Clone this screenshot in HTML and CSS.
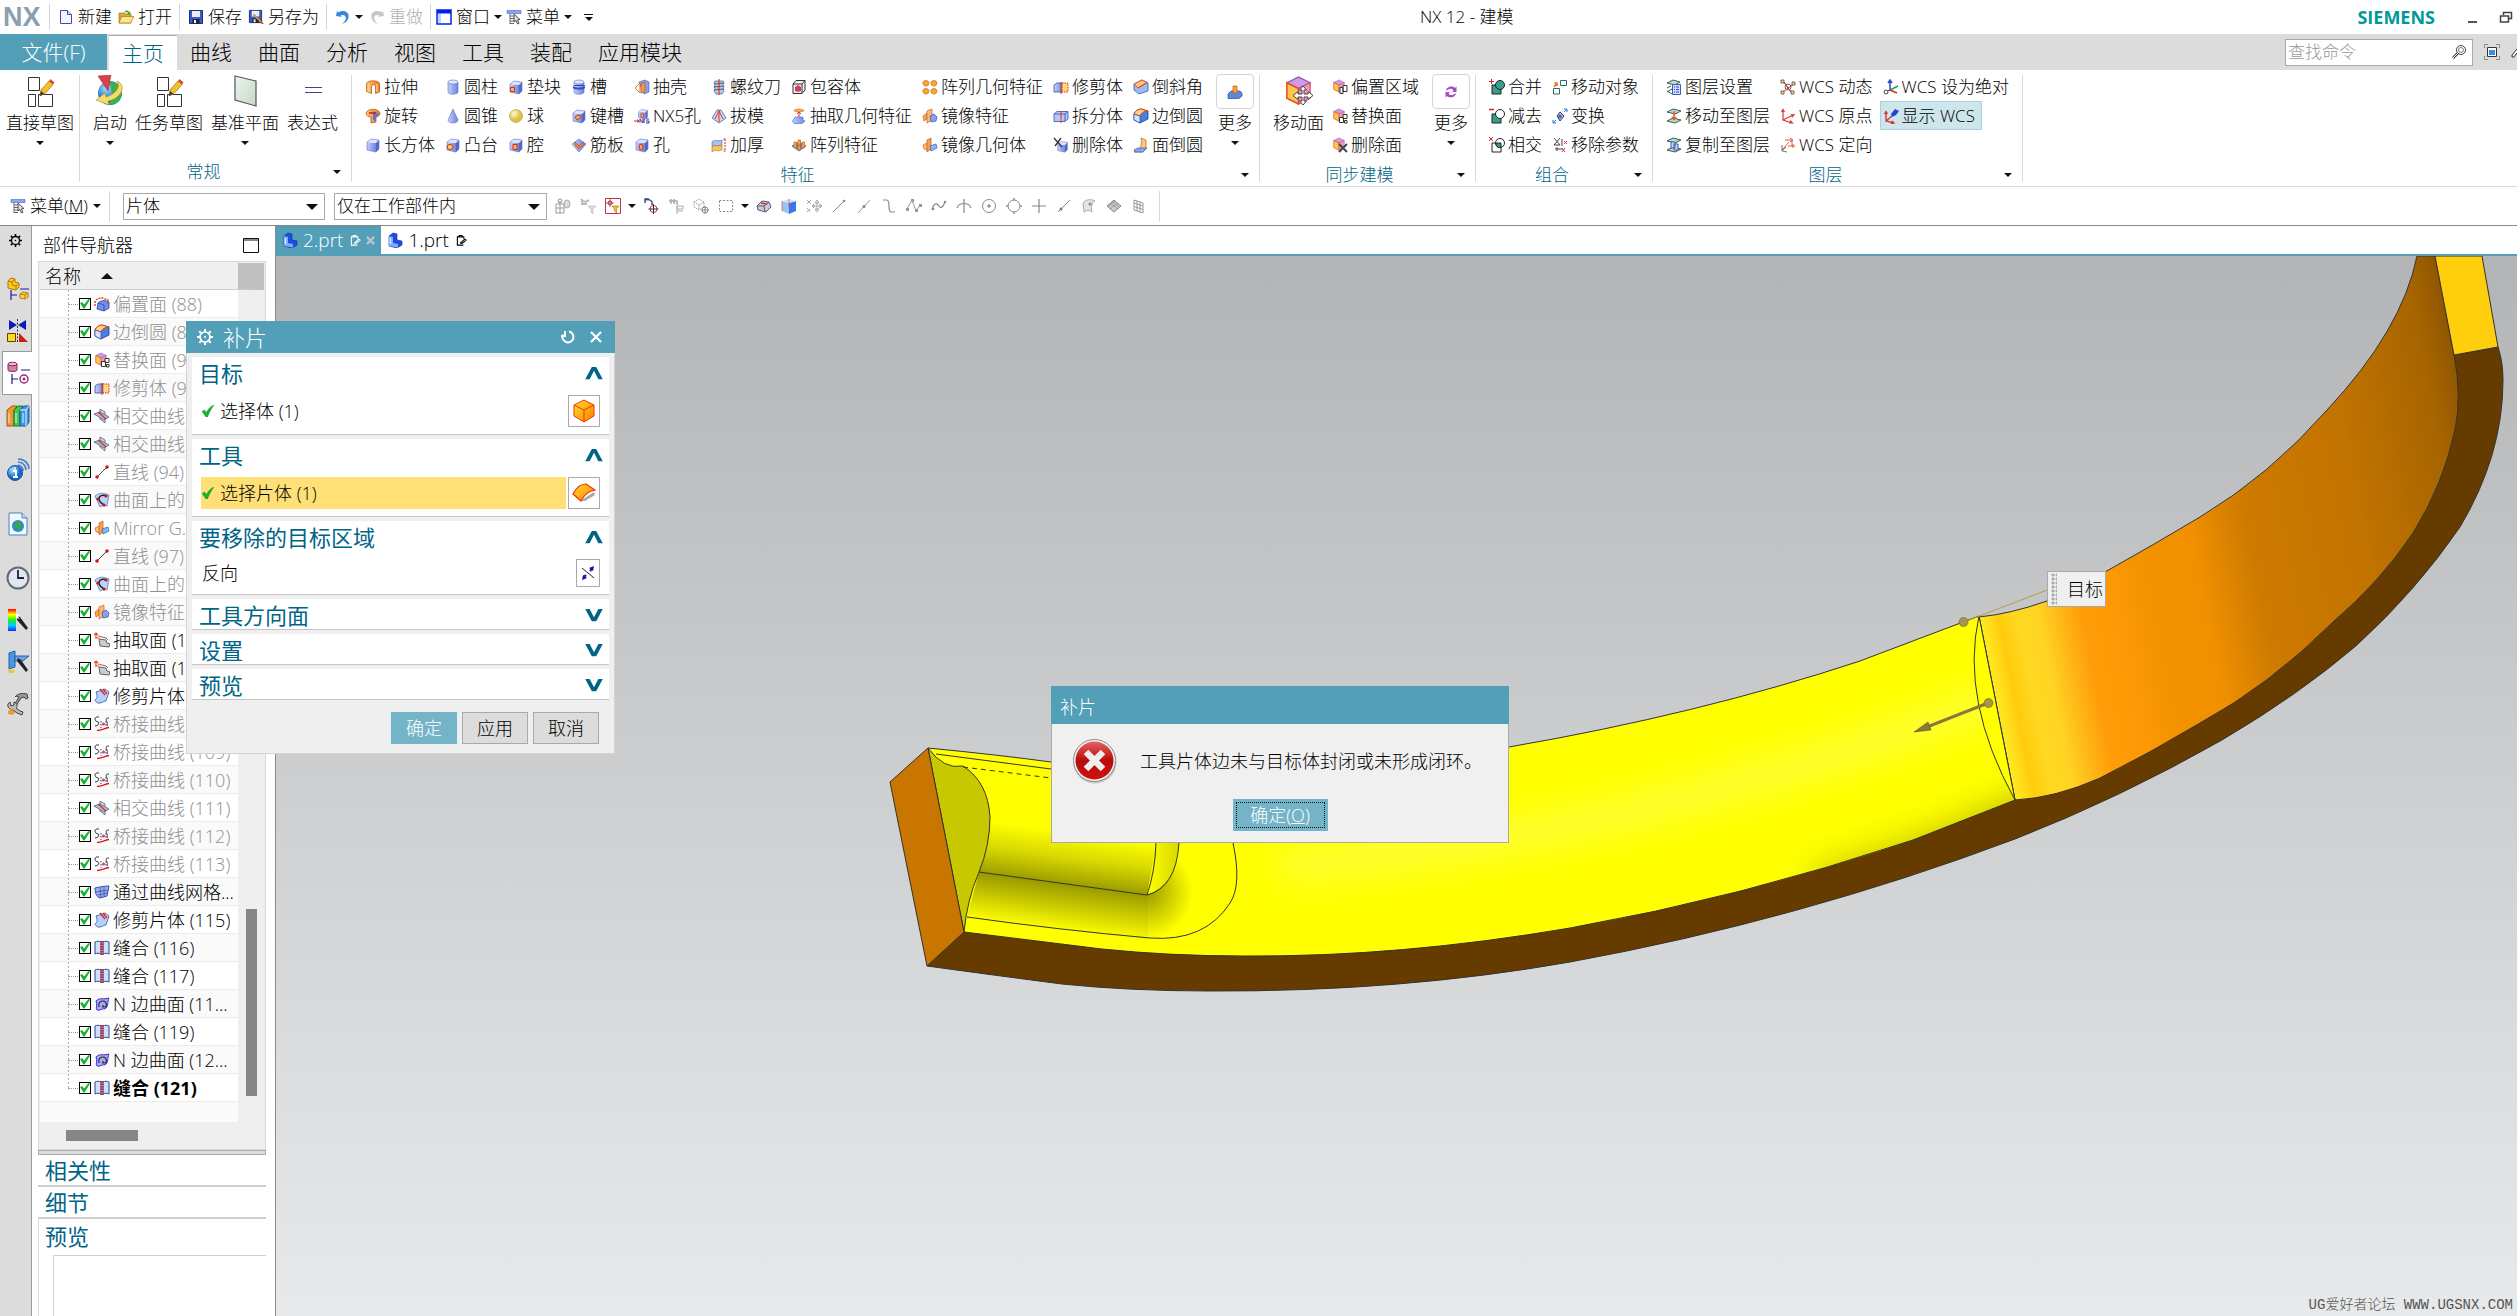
FILE: index.html
```html
<!DOCTYPE html>
<html lang="zh-CN">
<head>
  <meta charset="UTF-8">
  <meta name="viewport" content="width=device-width, initial-scale=1.0">
  <title>NX 12 - 建模</title>
  <link rel="stylesheet" href="styles.css">
</head>
<body>

<!-- icon sprite -->
<svg class="sprite" aria-hidden="true">
  <defs>
    <linearGradient id="gB"><stop offset="0" stop-color="#c3d0fb"/><stop offset="1" stop-color="#6c82e4"/></linearGradient>
    <linearGradient id="gO"><stop offset="0" stop-color="#ffc46a"/><stop offset="1" stop-color="#ee7a20"/></linearGradient>
    <linearGradient id="gRain" x2="0" y2="1"><stop offset="0" stop-color="#f00"/><stop offset=".25" stop-color="#ff0"/><stop offset=".5" stop-color="#2e2"/><stop offset=".75" stop-color="#0cf"/><stop offset="1" stop-color="#22f"/></linearGradient>
    <radialGradient id="gGlobe" cx=".35" cy=".3"><stop offset="0" stop-color="#a8e8ff"/><stop offset="1" stop-color="#1566c8"/></radialGradient>
    <radialGradient id="gBall" cx=".35" cy=".3"><stop offset="0" stop-color="#fffbd0"/><stop offset="1" stop-color="#d8c040"/></radialGradient>
    <linearGradient id="gPlane" x2="1" y2="1"><stop offset="0" stop-color="#eef4ee"/><stop offset="1" stop-color="#c4d8c6"/></linearGradient>
    <linearGradient id="gErr" x2="0" y2="1"><stop offset="0" stop-color="#e86060"/><stop offset=".5" stop-color="#b80c0c"/><stop offset="1" stop-color="#d01010"/></linearGradient>
    <linearGradient id="gHot" x2="1" y2="1"><stop offset="0" stop-color="#ffe030"/><stop offset="1" stop-color="#ff7a00"/></linearGradient>
  </defs>

  <symbol id="box" viewBox="0 0 16 16"><path d="M2 5l9 1v9l-9-2z" fill="url(#gB)"/><path d="M2 5l4-3 8 1-3 3z" fill="#dde5fd"/><path d="M11 6l3-3v9l-3 3z" fill="#5468c4"/><path d="M2 5l4-3 8 1v9l-3 3-9-2z" fill="none" stroke="#6070b8" stroke-width=".6"/></symbol>
  <symbol id="new" viewBox="0 0 16 16"><path d="M2.500 1.500h7l4 4v9h-11z" fill="#f4f6ff" stroke="#3c4ea0"/><path d="M9.500 1.500v4h4" fill="#ccd6f8" stroke="#3c4ea0"/></symbol>
  <symbol id="open" viewBox="0 0 16 16"><path d="M1 4h5l1 1h6v9H1z" fill="#dba93a" stroke="#a67a1a" stroke-width=".7"/><path d="M3.500 7.500H16L12.500 14H1z" fill="#ffe48a" stroke="#a67a1a" stroke-width=".7"/><path d="M6 4c1-3 4-3 5-1l1.500-.5L12 6 9 4.500 10 4C9 2.500 7.500 3 6 4z" fill="#44a83a"/></symbol>
  <symbol id="save" viewBox="0 0 16 16"><path d="M1.500 1.500h13v13h-13z" fill="#3a5cc8" stroke="#1a2f7c"/><path d="M4 2h8v6H4z" fill="#e8eeff"/><path d="M4.500 10h7v4.500h-7z" fill="#223"/><path d="M6 11h2v3H6z" fill="#fff"/></symbol>
  <symbol id="saveas" viewBox="0 0 16 16"><use href="#save" width="15" height="15"/><path d="M6 5l7 7 2.500 3-3-1.500-7-7z" fill="#ffb020" stroke="#a05000" stroke-width=".5"/><path d="M13 12.500l2.500 2.500-3-1z" fill="#d01010"/></symbol>
  <symbol id="undo" viewBox="0 0 16 16"><path d="M1 7l1-5 1.500 1.500C8 0 15 3 13.500 8.500 13 12 10 14 7 15c4-3 5-7 2.500-8.500C8 5.500 6.500 6 5.500 6.500L7 8z" fill="#3d86d8"/></symbol>
  <symbol id="redo" viewBox="0 0 16 16"><path d="M15 7l-1-5-1.500 1.500C8 0 1 3 2.500 8.500 3 12 6 14 9 15 5 12 4 8 6.500 6.500 8 5.500 9.500 6 10.500 6.500L9 8z" fill="#c6c6c6"/></symbol>
  <symbol id="win" viewBox="0 0 16 16"><path d="M1 1h14v14H1z" fill="#fff" stroke="#0020f0" stroke-width="1.500"/><path d="M1 1h14v3.500H1z" fill="#0020f0"/><path d="M2 5h3v9H2z" fill="#b8d8f8"/></symbol>
  <symbol id="menu" viewBox="0 0 16 16"><path d="M1 1.500h14v3H1z" fill="#8aa4ee" stroke="#4c64c0" stroke-width=".6"/><path d="M4 7h5M4 9.500h5M4 12h5M4 14.500h4M4 5v10" stroke="#666"/><path d="M8 5l6 5.500-2.500.3 1.500 3.500-1.500.7-1.500-3.500L8 13z" fill="#ddd" stroke="#333" stroke-width=".8"/></symbol>

  <symbol id="sketch" viewBox="0 0 30 32"><path d="M3.500 2.500h11v13h-11zM3.500 19.500h7v12h-7zM13.500 19.500h14v12h-14z" fill="#fff" stroke="#333"/><path d="M15 21l1-6 8-9 4 3.500-8 9z" fill="#f5c030" stroke="#9a6a10" stroke-width=".7"/><path d="M24 6l1.500-2 4 3.500L28 9.500z" fill="#d84a30"/><path d="M15 21l1-5 3 2.500z" fill="#333"/></symbol>
  <symbol id="launch" viewBox="0 0 32 32"><circle cx="16" cy="18" r="12" fill="url(#gGlobe)"/><path d="M13 7c6 2 2 8 6 11 3 2-2 8-5 11 7 2 14-4 14-11C28 10 20 5 13 7z" fill="#3db04c"/><path d="M23 6c10 4 5 17-9 20l1 4-13-5 9-7 1 4c10-3 15-10 11-16z" fill="#f6dc6c" stroke="#b08a20" stroke-width=".6"/><path d="M4 1l13-1-3 16z" fill="#d84050" stroke="#a02030" stroke-width=".5"/></symbol>
  <symbol id="plane" viewBox="0 0 32 32"><path d="M6 1l21 5v25L6 25z" fill="url(#gPlane)" stroke="#555" stroke-width="1.200"/></symbol>
  <symbol id="expr" viewBox="0 0 32 32"><path d="M8 12.500h17M8 17.500h17" stroke="#44408c" stroke-width="1.200"/></symbol>

  <symbol id="extrude" viewBox="0 0 16 16"><path d="M1.500 4c2-3 11-3 13 0v9l-4 1.500V7c-1-1.500-3-1.500-4 0v7.500l-5-2z" fill="url(#gO)" stroke="#b05a10" stroke-width=".7"/><path d="M4 5v8M12 5v8" stroke="#ffe8c0"/></symbol>
  <symbol id="revolve" viewBox="0 0 16 16"><path d="M1 5c2-5 12-5 14 0 0 3-3 4-4 4v5l-5 1V9C4 9 1 8 1 5z" fill="url(#gO)" stroke="#a05010" stroke-width=".7"/><path d="M8 3v9l3 1V9l3-3z" fill="#5878d8"/><path d="M4 5h7" stroke="#d01818" stroke-width="1.500"/></symbol>
  <symbol id="cyl" viewBox="0 0 16 16"><path d="M3 3v10c0 3 10 3 10 0V3z" fill="url(#gB)" stroke="#6070b8" stroke-width=".6"/><ellipse cx="8" cy="3" rx="5" ry="2" fill="#e2e9fe" stroke="#6070b8" stroke-width=".6"/></symbol>
  <symbol id="cone" viewBox="0 0 16 16"><path d="M8 1l5 11c0 4-10 4-10 0z" fill="url(#gB)" stroke="#6070b8" stroke-width=".6"/></symbol>
  <symbol id="ball" viewBox="0 0 16 16"><circle cx="8" cy="8" r="6.500" fill="url(#gBall)" stroke="#b09c30" stroke-width=".6"/></symbol>
  <symbol id="boss" viewBox="0 0 16 16"><use href="#box"/><ellipse cx="5" cy="10" rx="3" ry="2.500" fill="#ffd060" stroke="#d03010"/></symbol>
  <symbol id="pad" viewBox="0 0 16 16"><use href="#box"/><path d="M2.500 8.500h4v4h-4z" fill="#ffb060" stroke="#d03010"/></symbol>
  <symbol id="pocket" viewBox="0 0 16 16"><use href="#box"/><path d="M5 7.500h4v5H5z" fill="#f6b080" stroke="#d03010"/></symbol>
  <symbol id="hole" viewBox="0 0 16 16"><use href="#box"/><ellipse cx="7" cy="10" rx="2" ry="3" fill="#f6a070" stroke="#d03010"/></symbol>
  <symbol id="slot" viewBox="0 0 16 16"><use href="#cyl"/><path d="M3 6h10l1.500 1H3zM2 7c2 2 10 2 12 0v2c-2 2-10 2-12 0z" fill="#3450b8"/></symbol>
  <symbol id="keyslot" viewBox="0 0 16 16"><use href="#box"/><path d="M4 9l4-2 2 2-4 3z" fill="#ffb060" stroke="#d03010"/></symbol>
  <symbol id="rib" viewBox="0 0 16 16"><path d="M1 7l7-5 7 5-7 8z" fill="url(#gB)" stroke="#4868b8" stroke-width=".6"/><path d="M4 5l4 4 4-4v3l-4 4-4-4z" fill="#f48040" stroke="#c03810" stroke-width=".6"/></symbol>
  <symbol id="shell" viewBox="0 0 16 16"><path d="M5 3l6-2 4 2v10l-5 2z" fill="#8aa0e8" stroke="#4458a8" stroke-width=".6"/><path d="M1 9l5-5v10z" fill="#fff0d0" stroke="#a05010" stroke-width=".6"/><path d="M7 5l4-2v10l-4 1z" fill="#f49a48" stroke="#a05010" stroke-width=".6"/></symbol>
  <symbol id="nx5" viewBox="0 0 16 16"><use href="#hole" x="3" width="12" height="12"/><path d="M0 13h5M3 11.500L5 13l-2 1.500" stroke="#e02020" fill="none"/><path d="M6 15v-4l3 4v-4M10 11v4M12 11h3M12 13h3v2h-3" stroke="#44308c" fill="none"/></symbol>
  <symbol id="thread" viewBox="0 0 16 16"><path d="M4 2h8l1 2-1 1.500L13 8l-1 1.500 1 2.500-2 3H5l-2-3 1-2.500L3 8l1-2.500L3 4z" fill="#b9cbe0" stroke="#4a6080" stroke-width=".7"/><path d="M3 5l10-1M3 8l10-1M3 11l10-1" stroke="#4a6080"/><path d="M8 0v16" stroke="#e02020"/></symbol>
  <symbol id="draft" viewBox="0 0 16 16"><path d="M1 10l5-8h4l5 8-7 5z" fill="#c8d6f4" stroke="#4868a8" stroke-width=".8"/><path d="M8 2v12M8 3L4 11M8 3l4 8" stroke="#e03020" fill="none"/></symbol>
  <symbol id="thick" viewBox="0 0 16 16"><path d="M1 5c3-3 6 0 10-2v5c-4 2-7-1-10 2z" fill="#a8c0f0" stroke="#4868b8" stroke-width=".6"/><path d="M1 10c3-3 6 0 10-2v5c-4 2-7-1-10 2z" fill="#f8c460" stroke="#a87018" stroke-width=".6"/><path d="M14 2v12M12.500 2h3M12.500 14h3" stroke="#d02020" stroke-dasharray="2 1"/></symbol>
  <symbol id="bound" viewBox="0 0 16 16"><path d="M2 5l3-3.500h9V11l-3 3.500H2z" fill="#f0f0f0" stroke="#333"/><path d="M11 14.500V5H2M11 5l3-3.500" fill="none" stroke="#333"/><path d="M4 8l3-2 3 2v4l-3 1-3-1z" fill="#d04060"/></symbol>
  <symbol id="extract" viewBox="0 0 16 16"><path d="M3 2.500c3-2 7-2 10 0-2 2-8 2-10 0z" fill="#ffb050" stroke="#c06010" stroke-width=".6"/><path d="M8 9V4M6 6l2-2 2 2" stroke="#e03020" fill="none"/><path d="M4 9h8v3l2 1-3 2.500H3L1.500 13z" fill="url(#gB)" stroke="#4868b8" stroke-width=".6"/></symbol>
  <symbol id="pattern" viewBox="0 0 16 16"><path d="M1 9l7-4 7 4-7 5z" fill="#7088d8" stroke="#3a50a0" stroke-width=".6"/><path d="M3 5h2.500v6H3zM7 3h2.500v6H7zM7 8h2.500v5H7zM11 5h2.500v6H11z" fill="#f8a848" stroke="#b05a10" stroke-width=".6"/></symbol>
  <symbol id="patgeo" viewBox="0 0 16 16"><g fill="#f8a830" stroke="#c86c10" stroke-width=".7"><path id="pg" d="M1 3l2-1.500 3 .5 1 2-1 2.500L3 7 1 5.500z"/><use href="#pg" x="8"/><use href="#pg" y="8"/><use href="#pg" x="8" y="8"/></g></symbol>
  <symbol id="mirfeat" viewBox="0 0 16 16"><path d="M1 8l4-3v6l-3 2z" fill="#f8a848" stroke="#b05a10" stroke-width=".6"/><path d="M5 3l5-2v11l-5 3z" fill="#ffb878" stroke="#d06020" stroke-width=".7"/><path d="M8 8l4-2 3 3-1 4-5 1z" fill="#8aa0f0" stroke="#3a50a0" stroke-width=".7"/></symbol>
  <symbol id="mirbody" viewBox="0 0 16 16"><path d="M1 8l4-2 2 2v5l-5-1z" fill="#ffc070" stroke="#b05a10" stroke-width=".6"/><path d="M5 3l4-2v11l-4 3z" fill="#f8a050" stroke="#c05a18" stroke-width=".7"/><path d="M8 9l6-2 1 4-6 3z" fill="#8cb4f0" stroke="#3060a8" stroke-width=".7"/></symbol>
  <symbol id="trim" viewBox="0 0 16 16"><path d="M1 6l3-2h6v9H1z" fill="url(#gB)" stroke="#3a50a8" stroke-width=".8"/><path d="M9 4h6v9H9z" fill="#ffd880" stroke="#d03010" stroke-dasharray="1.500 1"/><path d="M8 3v12" stroke="#c03020"/></symbol>
  <symbol id="split" viewBox="0 0 16 16"><path d="M1 6l3-2.500h11V11l-3 2.500H1z" fill="#b8c6f6" stroke="#3a50a8" stroke-width=".8"/><path d="M1 6h11v7M12 6l3-2.500" stroke="#3a50a8" fill="none" stroke-width=".8"/><path d="M8 3v12" stroke="#e03020"/></symbol>
  <symbol id="delbody" viewBox="0 0 16 16"><use href="#box" x="3" y="3" width="13" height="13"/><path d="M1 1l8 9M8 1L2 9" stroke="#333" stroke-width="1.300"/></symbol>
  <symbol id="chamfer" viewBox="0 0 16 16"><path d="M1 5l8-4 6 3v8l-9 3-5-4z" fill="#9cbcf0" stroke="#2c5ca8" stroke-width=".8"/><path d="M1 5l8-4 5 2.500L5 9z" fill="#ffc878" stroke="#e04010" stroke-width=".8"/><path d="M5 9l9-5.500" stroke="#e04010"/></symbol>
  <symbol id="eblend" viewBox="0 0 16 16"><path d="M1 6c1-3 4-5 7-5l7 2v8l-8 4-6-3z" fill="#4a80dc" stroke="#1c3c90" stroke-width=".8"/><path d="M1 6c1-3 4-5 7-5l7 2c-4 0-7 2-8 5z" fill="#ffd080" stroke="#d84010" stroke-width=".9"/><path d="M1 6l6 2v7l-6-3z" fill="#d4e2fb" stroke="#1c3c90" stroke-width=".6"/></symbol>
  <symbol id="fblend" viewBox="0 0 16 16"><path d="M8 1l5 2v9L9 15H1l3-3c4 0 5-4 4-11z" fill="#ffc880" stroke="#b06818" stroke-width=".7"/><path d="M1 13l4-2h9l-4 4H2z" fill="#88a8ee" stroke="#3a58a8" stroke-width=".7"/></symbol>
  <symbol id="more" viewBox="0 0 16 16"><path d="M1 10l3-3h9l2 2v3l-3 2.500H1z" fill="#5c88d8" stroke="#2c4c98" stroke-width=".7"/><path d="M6 2h4v7H6z" fill="#f8a040" stroke="#c05a10" stroke-width=".7"/></symbol>

  <symbol id="pcube" viewBox="0 0 16 16"><path d="M2 4l6-3 6 3-6 3z" fill="#cf9ae8" stroke="#9050b0" stroke-width=".6"/><path d="M2 4l6 3v8l-6-3z" fill="#ffc848" stroke="#e05020" stroke-width=".8"/><path d="M14 4L8 7v8l6-3z" fill="#f49ab0" stroke="#c05070" stroke-width=".6"/></symbol>
  <symbol id="moveface" viewBox="0 0 32 32"><use href="#pcube" width="31" height="31"/><path d="M20 11l3.500 4H21v4h4v-2.500l5 4-5 4V22h-4v4h2.500L20 30l-3.500-4H19v-4h-4v2.500l-5-4 5-4V19h4v-4h-2.500z" fill="#fff" stroke="#444"/></symbol>
  <symbol id="offreg" viewBox="0 0 16 16"><use href="#pcube" width="14" height="14"/><path d="M8 8.500h3v6H8zM11 6.500h4v6h-4z" fill="#fff" stroke="#333"/></symbol>
  <symbol id="replface" viewBox="0 0 16 16"><use href="#pcube" width="14" height="14"/><path d="M7.500 9.500h4v5h-4zM11 6.500h4v4h-4zM12.500 12.500h2.500v2.500h-2.500z" fill="#fff" stroke="#333"/></symbol>
  <symbol id="delface" viewBox="0 0 16 16"><use href="#pcube" width="14" height="14"/><path d="M7 7l8 8M15 7l-8 8" stroke="#444" stroke-width="2"/></symbol>
  <symbol id="recycle" viewBox="0 0 16 16"><path d="M3 7c0-4 6-6 9-3l1.500-1.500V8H9l1.500-1.500C9 4 6 4.500 3 7zM13 9c0 4-6 6-9 3l-1.500 1.500V8H7L5.500 9.500C7 12 10 11.500 13 9z" fill="#a64cc4"/></symbol>

  <symbol id="unite" viewBox="0 0 16 16"><path d="M3 6h9v9H3z" fill="#34a08c" stroke="#222"/><circle cx="11" cy="6" r="4.500" fill="#34a08c" stroke="#222"/><path d="M0 2.500h5M2.500 0v5" stroke="#e02020"/></symbol>
  <symbol id="subtract" viewBox="0 0 16 16"><path d="M3 6h9v9H3z" fill="#34a08c" stroke="#222"/><circle cx="11" cy="6" r="4.500" fill="#fff" stroke="#222"/><path d="M0 1.500h5" stroke="#e02020" stroke-width="1.500"/></symbol>
  <symbol id="intersect" viewBox="0 0 16 16"><path d="M3 6h9v9H3z" fill="#fff" stroke="#222"/><circle cx="11" cy="6" r="4.500" fill="#fff" stroke="#222"/><path d="M7 6h5v4.500C8 11 7 9 7 6z" fill="#34a08c" stroke="#222"/><path d="M0 0l4 4M4 0L0 4" stroke="#e02020"/></symbol>
  <symbol id="moveobj" viewBox="0 0 16 16"><path d="M8.500 1.500h6v5h-6zM1.500 9.500h6v5.500h-6z" fill="#fff" stroke="#2c6c64"/><path d="M2 8l3-4M2.500 4H5v3" stroke="#f07020" fill="none" stroke-width="1.500"/></symbol>
  <symbol id="transform" viewBox="0 0 16 16"><path d="M8 4l4 4-4 5-3-5z" fill="#b8c4ec" stroke="#34407c"/><circle cx="8" cy="8.500" r="2" fill="#5868b0"/><path d="M1 15l3-3M1 12v3h3M15 1l-3 3M12 1h3v3" stroke="#3070e0" fill="none"/></symbol>
  <symbol id="rmparm" viewBox="0 0 16 16"><path d="M2 1l6 7M8 1L2 8M2 8h6M10 2v7M3 12h8M5 10v4" stroke="#444" fill="none"/><path d="M12 4l3 3M15 4l-3 3M10 11l3 4M13 11l-3 4" stroke="#d84040"/></symbol>
  <symbol id="layset" viewBox="0 0 16 16"><path d="M1 4l6-3 7 2-5 3zM1 9l4-2M1 13l5-3M1 12l5 3" fill="#c0dccc" stroke="#3c5c54"/><path d="M6.500 5.500h8v10h-8z" fill="#d4dcff" stroke="#4458b8"/><path d="M8 8h1M10 8h3M8 10.500h1M10 10.500h3M8 13h1M10 13h3" stroke="#3048d0"/></symbol>
  <symbol id="movelay" viewBox="0 0 16 16"><path d="M1 4l6-3 8 2-6 3zM1 13l6-3 8 2-6 3z" fill="#bcd8c8" stroke="#3c5c54"/><path d="M8 3v8M6 9l2 2.500L10 9" stroke="#e85818" fill="none" stroke-width="1.500"/></symbol>
  <symbol id="copylay" viewBox="0 0 16 16"><path d="M1 4l6-3 8 2-6 3zM1 13l6-3 8 2-6 3z" fill="#bcd8c8" stroke="#3c5c54"/><path d="M5 5h4v6H5zM8 7h4v6H8z" fill="#c8d4ff" stroke="#4458a8"/></symbol>
  <symbol id="wcsdyn" viewBox="0 0 16 16"><path d="M3 2l5 7 6-4M8 9l4 5M3 2l9 12M3 13l5-4" stroke="#c83030" fill="none"/><path d="M1 1h3v3H1zM12 3h3v3h-3zM1 12h3v3H1zM11 12h3v3h-3z" fill="#ffe070" stroke="#333" stroke-width=".7"/><circle cx="8" cy="8" r="3" fill="none" stroke="#806060"/></symbol>
  <symbol id="wcsorg" viewBox="0 0 16 16"><path d="M3 3v9l9 3M3 12l10-5M1.500 4L3 1.500 4.500 4M11 6.500l3 .2-2 2.300M10 12.500l2.500 2.500H9" stroke="#d83838" fill="none" stroke-width="1.200"/></symbol>
  <symbol id="wcsori" viewBox="0 0 16 16"><path d="M5 3h7M10 1l3 2-3 2M12 3v6M8 9h7M13 7v4M2 13l7-8" stroke="#e05838" fill="none"/><path d="M2 8v6l5 1M2 14l4-4" stroke="#777" fill="none"/></symbol>
  <symbol id="wcsabs" viewBox="0 0 16 16"><path d="M7 2v9M5 4l2-3 2 3" stroke="#2848d0" fill="none" stroke-width="1.500"/><path d="M7 11l8-4" stroke="#28a040" stroke-width="1.500"/><path d="M7 11l7 3" stroke="#d03030" stroke-width="1.500"/><circle cx="3" cy="13" r="2" fill="none" stroke="#444"/><path d="M4.500 12L7 11" stroke="#444"/></symbol>
  <symbol id="wcsshow" viewBox="0 0 16 16"><path d="M3 4v9l8 2M3 13l6-5M1.500 6L3 3.500 4.500 6M9 13l2 2-3 .5" stroke="#d83030" fill="none" stroke-width="1.300"/><path d="M8 6l4-5 4 2-3 4-4 2z" fill="#2444d0"/></symbol>

  <!-- selection bar -->
  <symbol id="s1" viewBox="0 0 16 16"><path d="M1 6h8v9H1zM1 10h8M5 3v12" fill="none" stroke="#999"/><circle cx="5" cy="3" r="2" fill="none" stroke="#999"/><ellipse cx="12" cy="6" rx="3" ry="4" fill="#ddd" stroke="#aaa"/></symbol>
  <symbol id="s2" viewBox="0 0 16 16"><path d="M1 1c3 4 6 3 8 1M2 2v4h5" fill="none" stroke="#bbb" stroke-width="2"/><path d="M8 8h8l-3 3v5l-2-2v-3z" fill="#ddd" stroke="#bbb" stroke-width=".7"/></symbol>
  <symbol id="s3" viewBox="0 0 16 16"><path d="M.5.500h15v15H.5z" fill="#fff" stroke="#c83040"/><circle cx="5" cy="5" r="2" fill="none" stroke="#a02838"/><path d="M5 1v8M1 5h8" stroke="#a02838" stroke-width=".7"/><path d="M7 8h7l-2.500 3v4l-2-2v-2z" fill="#f4b430" stroke="#b87a10" stroke-width=".6"/></symbol>
  <symbol id="s4" viewBox="0 0 16 16"><path d="M2 5V1h4M2 2c4-1 8 0 7 5" fill="none" stroke="#3a4484" stroke-width="1.400"/><circle cx="10.500" cy="11" r="3.500" fill="none" stroke="#d83040"/><path d="M10.500 6v10M5.500 11h10" stroke="#333"/></symbol>
  <symbol id="s5" viewBox="0 0 16 16"><path d="M1 3h8v4M3 1v5M6 1v5" fill="none" stroke="#aaa" stroke-width="1.500"/><path d="M9 8h6v3H9zM9 13h6M9 8v8" fill="none" stroke="#aaa"/></symbol>
  <symbol id="s6" viewBox="0 0 16 16"><path d="M1 4l5-3 5 3v5l-5 3-5-3zM1 4l5 3 5-3M6 7v5" fill="none" stroke="#999" stroke-dasharray="1.500 1"/><circle cx="12" cy="12" r="3" fill="none" stroke="#888"/><path d="M12 8v8M8 12h8" stroke="#888"/></symbol>
  <symbol id="s7" viewBox="0 0 16 16"><path d="M1.500 2.500h13v11h-13z" fill="none" stroke="#888" stroke-dasharray="2 1.500"/></symbol>
  <symbol id="s8" viewBox="0 0 16 16"><path d="M1 8l5-5 7 1 2 5-5 5-8-2z" fill="#c8ccd8" stroke="#555b70"/><path d="M9 14l-1-6 5-4M8 8L1 8" stroke="#555b70" fill="none"/><path d="M5 5l6 1" stroke="#e03030" stroke-width="1.500"/></symbol>
  <symbol id="s9" viewBox="0 0 16 16"><path d="M1 3l7 2v11l-7-3z" fill="#9cc4f4"/><path d="M8 5l7-2v10l-7 3z" fill="#3c78e4"/><path d="M1 3l7-2 7 2-7 2z" fill="#d0e4fc"/><path d="M8 1v9M1 3v10" stroke="#e04060" stroke-width=".7"/></symbol>
  <symbol id="s10" viewBox="0 0 16 16"><path d="M1 2l4 4M1 6l4-4M1 10l3 4M1 14l3-3M7 8h8M11 4v8" fill="none" stroke="#aaa"/><path d="M11 2l2 3h-4zM11 14l2-3H9zM6 8l2-2v4zM16 8l-2-2v4z" fill="none" stroke="#999" stroke-width=".8"/></symbol>
  <symbol id="s11" viewBox="0 0 16 16"><path d="M2 14L13 3" stroke="#888" fill="none"/><circle cx="13" cy="3" r="1.300" fill="#888"/></symbol>
  <symbol id="s12" viewBox="0 0 16 16"><path d="M2 15L14 2" stroke="#999" fill="none"/><circle cx="8" cy="8.500" r="1.500" fill="#888"/></symbol>
  <symbol id="s13" viewBox="0 0 16 16"><path d="M2 2h4c4 1 0 11 4 12h4" stroke="#888" fill="none" stroke-width="1.200"/></symbol>
  <symbol id="s14" viewBox="0 0 16 16"><path d="M1 11l5-9 4 11 4-6" stroke="#999" fill="none"/><path d="M0 10h3v3H0zM5 1h3v3H5zM9 11h3v3H9zM13 6h3v3h-3z" fill="#999"/></symbol>
  <symbol id="s15" viewBox="0 0 16 16"><path d="M1 12c2-8 5-7 7-4s4 1 6-4" stroke="#888" fill="none" stroke-width="1.200"/><circle cx="2" cy="11" r="1.300" fill="#888"/><circle cx="14" cy="4" r="1.300" fill="#888"/></symbol>
  <symbol id="s16" viewBox="0 0 16 16"><path d="M8 1v14M1 10c2-6 12-6 14 0" stroke="#888" fill="none" stroke-width="1.200"/></symbol>
  <symbol id="s17" viewBox="0 0 16 16"><circle cx="8" cy="8" r="6.500" fill="none" stroke="#888"/><path d="M8 6v4M6 8h4" stroke="#777"/></symbol>
  <symbol id="s18" viewBox="0 0 16 16"><circle cx="8" cy="8" r="6" fill="none" stroke="#888"/><path d="M7 0h2v3H7zM7 13h2v3H7zM0 7h3v2H0zM13 7h3v2h-3z" fill="#aaa"/></symbol>
  <symbol id="s19" viewBox="0 0 16 16"><path d="M8 1v14M1 8h14" stroke="#888" stroke-width="1.200"/></symbol>
  <symbol id="s20" viewBox="0 0 16 16"><path d="M2 14L14 2" stroke="#888"/><circle cx="5" cy="11" r="1.500" fill="#777"/></symbol>
  <symbol id="s21" viewBox="0 0 16 16"><path d="M2 5c3-4 8-4 12-2-4 2-4 7-3 11-4-3-6-1-8 0z" fill="#e4e4e4" stroke="#aaa"/><circle cx="9" cy="6" r="1.500" fill="#888"/></symbol>
  <symbol id="s22" viewBox="0 0 16 16"><path d="M1 8l7-6 7 6-7 6z" fill="#ccc" stroke="#888"/><path d="M4 5l8 6M6 3l7 6M4 11l8-6M2 9l7-6" stroke="#888" stroke-width=".7"/></symbol>
  <symbol id="s23" viewBox="0 0 16 16"><path d="M3 2l9 3v10l-9-3zM6 3v10M9 4v10M3 5l9 3M3 8.500l9 3" fill="none" stroke="#999"/></symbol>

  <!-- navigator tree -->
  <symbol id="offface" viewBox="0 0 16 16"><path d="M4 7c2-2 5-3 8-2l3 1v6l-5 3-7-2z" fill="#6f90ec" stroke="#2840a0" stroke-width=".8"/><path d="M4 7l6 2v6" fill="none" stroke="#2840a0" stroke-width=".7"/><path d="M1 10V6c1-3 4-4 7-4l6 2v4" fill="none" stroke="#e02828" stroke-dasharray="2 1" stroke-width="1.300"/></symbol>
  <symbol id="intc" viewBox="0 0 16 16"><path d="M6 1l5 3v11l-5-4z" fill="#d0dcec" stroke="#4a6080" stroke-width=".8"/><path d="M0 6l6-2 9 5-5 3z" fill="#aebed4" stroke="#4a6080" stroke-width=".8"/><path d="M4 4l8 7" stroke="#e83020" stroke-width="1.600"/></symbol>
  <symbol id="line" viewBox="0 0 16 16"><path d="M3 13L13 3" stroke="#444"/><circle cx="3" cy="13" r="1.800" fill="#e01010"/><circle cx="13" cy="3" r="1.800" fill="#e01010"/></symbol>
  <symbol id="curveon" viewBox="0 0 16 16"><path d="M1 4c5-4 9-3 14-1l-2 11c-3-1-6 0-7 1z" fill="#b8d4f8" stroke="#5070a8" stroke-width=".7"/><path d="M13 4c-5-2-8 0-8 3s2 4 5 6" fill="none" stroke="#222" stroke-width="1.500"/><circle cx="12" cy="4" r="1.600" fill="#d01010"/><circle cx="4" cy="7" r="1.600" fill="#d01010"/><circle cx="10" cy="13" r="1.600" fill="#d01010"/></symbol>
  <symbol id="extface" viewBox="0 0 16 16"><path d="M5 7l7 1 1 3 3 1-1 3-9-1z" fill="#ccc" stroke="#555" stroke-width=".9"/><path d="M4 4l8 2 2 2" fill="none" stroke="#a86040"/><path d="M2 6V1M0 3l2-2 2 2M1 6h4" stroke="#e84810" fill="none" stroke-width="1.200"/></symbol>
  <symbol id="trimsh" viewBox="0 0 16 16"><path d="M2 4l9-3 4 3-3 9c-3 0-5 3-8 2-2-1-3-2-3-3 3-2 2-5 1-8z" fill="#b4d0fa" stroke="#3a58a8" stroke-width=".8"/><path d="M6 1l5 6M9 1l4 5" stroke="#e02020" stroke-width="1.300"/></symbol>
  <symbol id="bridge" viewBox="0 0 16 16"><path d="M5 1C0 0 0 5 3 5.500S5 10 1 10M15 2c-4 0-3 2-2 4s-1 3 1 4" fill="none" stroke="#333"/><path d="M7 5v7M12 5v6" stroke="#2030d0" stroke-dasharray="1.500 1.500"/><path d="M3 14.500c4 0 7-2 12-3" fill="none" stroke="#e01818" stroke-width="1.400"/><circle cx="9.500" cy="8" r="1.500" fill="#e84010"/></symbol>
  <symbol id="mesh" viewBox="0 0 16 16"><path d="M1 4c5-1 9-2 14-2l-2 10-7 2c-3-1-5-4-5-10z" fill="#9aaef2" stroke="#3c50a8"/><path d="M2 8l12-2M4 11l9-2M6 3l1 11M10 2.500v10" stroke="#3c50a8" stroke-width=".8"/></symbol>
  <symbol id="sew" viewBox="0 0 16 16"><path d="M1 2c2-1 4-1 6 0v12c-2-1-4-1-6 0zM15 2c-2-1-4-1-6 0v12c2-1 4-1 6 0z" fill="#cfe0fb" stroke="#24489c"/><path d="M8 1v14" stroke="#d01818" stroke-width="3" stroke-dasharray="1.500 1"/></symbol>
  <symbol id="nside" viewBox="0 0 16 16"><path d="M2 5c4-4 7-1 13-3-2 4 0 8-4 11-3-1-5 2-8 1-2-2 1-5-1-9z" fill="#a8a8fa" stroke="#4030c8"/><path d="M5 11c-1-4 1-6 4-6s4 3 3 6H9V9" fill="none" stroke="#222" stroke-width="1.200"/></symbol>

  <!-- resource bar -->
  <symbol id="gear" viewBox="0 0 16 16"><circle cx="8" cy="8" r="5" fill="none" stroke="currentColor" stroke-width="1.700"/><path d="M8 0v3M8 13v3M0 8h3M13 8h3M2.300 2.300l2 2M11.700 11.700l2 2M2.300 13.700l2-2M11.700 4.300l2-2" stroke="currentColor" stroke-width="2"/><circle cx="8" cy="8" r="1" fill="currentColor"/></symbol>
  <symbol id="rAsm" viewBox="0 0 24 24"><path d="M2 4l3-3 4 1v3l4 1v4l-3 3-8-2z" fill="#ffc820" stroke="#b07808"/><path d="M2 4l4 1v3l4 1v4M6 5l3-3M10 9l3-3" fill="none" stroke="#b07808"/><path d="M14 17l3-2 5 1v4l-3 2-5-1zM14 17l5 1v4M19 18l3-2" fill="#ffd850" stroke="#b07808"/><path d="M5 13v10M5 18h6M14 12h9" stroke="#1a1a90" stroke-width="1.200" fill="none"/></symbol>
  <symbol id="rCon" viewBox="0 0 24 24"><path d="M3 1l8 5-8 5zM20 1l-8 5 8 5z" fill="#1018b8"/><path d="M1.500 14.500h8v8h-8z" fill="#ffd820" stroke="#604000"/><path d="M13 14l9 9h-9z" fill="#d02010"/><path d="M11.500 0v24" stroke="#333" stroke-dasharray="2 1.500"/></symbol>
  <symbol id="rNav" viewBox="0 0 24 24"><path d="M1 3v6c0 2 9 2 9 0V3z" fill="#d080a8" stroke="#802858"/><ellipse cx="5.500" cy="3" rx="4.500" ry="1.800" fill="#f0b8d0" stroke="#802858"/><path d="M5 13v10M5 18h6M14 9h9" stroke="#1a1a90" stroke-width="1.200" fill="none"/><circle cx="17" cy="18" r="4" fill="#fff" stroke="#903070" stroke-width="1.500"/><circle cx="17" cy="18" r="1.500" fill="#903070"/></symbol>
  <symbol id="rLib" viewBox="0 0 24 24"><path d="M1 6l5-4h5L8 6v16H1z" fill="#f09830" stroke="#a05808"/><path d="M8 6l4-4h5l-3 4v16H8z" fill="#40c850" stroke="#108028"/><path d="M14 6l4-4h5v16l-3 4h-6z" fill="#3c98e0" stroke="#1058a0"/><path d="M14 6h6v16M20 6l3-4M3 9v10M10 9v10M17 9v10" fill="none" stroke="#e8f4ff"/></symbol>
  <symbol id="rInfo" viewBox="0 0 24 24"><circle cx="9" cy="15" r="7.500" fill="url(#gGlobe)" stroke="#1c50a8"/><path d="M7 13h3v6M7 19h5M9 9.500v2" stroke="#fff" stroke-width="2" fill="none"/><path d="M12 7c4 1 5 4 5 6M12 4c5 0 8 4 8 8M12 1c7 0 11 5 11 10" fill="none" stroke="#4878c8" stroke-width="1.600"/></symbol>
  <symbol id="rWeb" viewBox="0 0 24 24"><path d="M3 1h13l5 5v17H3z" fill="#f2f8ff" stroke="#4a80c0"/><path d="M16 1v5h5" fill="#c8dcf4" stroke="#4a80c0"/><circle cx="12" cy="14" r="6" fill="#3088d0"/><path d="M12 8l4 6-3 4-5-3z" fill="#38a848"/></symbol>
  <symbol id="rClock" viewBox="0 0 24 24"><circle cx="12" cy="12" r="10.500" fill="#dfe8f2" stroke="#667" stroke-width="2"/><path d="M12 4v8h6" stroke="#222" stroke-width="1.800" fill="none"/></symbol>
  <symbol id="rRole" viewBox="0 0 24 24"><path d="M2 1h8v22H2z" fill="url(#gRain)"/><path d="M11 8l3 1 8 11-2 2-9-10z" fill="#222"/><path d="M10 4l1 3 3-1-2 3 2 2-4-1z" fill="#fff"/></symbol>
  <symbol id="rWiz" viewBox="0 0 24 24"><path d="M3 3l6-2v16l-6 2z" fill="#4898e0" stroke="#2060a8"/><path d="M9 6h14l-6 5H9z" fill="#70a0e0" stroke="#3060a8"/><path d="M2 20h7l-2 3H3z" fill="#f8c030"/><path d="M12 8l3 2 7 10-2 2-9-11z" fill="#222"/></symbol>
  <symbol id="rTool" viewBox="0 0 24 24"><path d="M9 5c3-4 8-4 12-3l1 4-2 1-2-2-3 1-5 8-2-1 5-8-3-1z" fill="#999" stroke="#444"/><path d="M4 10l1 4 3-1v-3c3 1 4 4 2 6l4 3 3 1-1 3-5-2-4-3c-3 0-6-3-5-6z" fill="#bbb" stroke="#444"/><path d="M2 19l4-2 3 4-3 2-4-1z" fill="#f09830"/></symbol>

  <symbol id="part" viewBox="0 0 16 16"><path d="M2 4l4-3 4 1v6l5 1v4l-5 3-8-2z" fill="#1c50dc" stroke="#0c2c90" stroke-width=".6"/><path d="M2 4l4 1v6l5 1v3.500L2 14z" fill="#7cacfc"/><path d="M3.500 6v6" stroke="#d0e4ff" stroke-width="1.500"/></symbol>
  <symbol id="mod" viewBox="0 0 12 12"><path d="M8 11H1.500V2h7v2M3.500 2V.500h3V2M5 8.500l4.500-4 1.500 1L7 9H5z" fill="none" stroke="currentColor" stroke-width="1.200"/></symbol>
  <symbol id="tick" viewBox="0 0 12 12"><path d="M0 6.500L2.500 5 4.500 7.500C6 4 8.500 1.500 12 0 9 4 7 8 5.500 12H4z" fill="#16b42a" stroke="#0c8a1c" stroke-width=".4"/></symbol>
  <symbol id="chev" viewBox="0 0 20 16"><path d="M0 15L7.500 1h5L20 15h-5L10 5.500 5 15z" fill="#006487"/></symbol>
</svg>

<header class="titlebar">
  <span class="logo">NX</span>
  <div class="quick">
    <button><svg class="ic"><use href="#new"/></svg>新建</button>
    <button><svg class="ic"><use href="#open"/></svg>打开</button>
  </div>
  <div class="quick">
    <button><svg class="ic"><use href="#save"/></svg>保存</button>
    <button><svg class="ic"><use href="#saveas"/></svg>另存为</button>
  </div>
  <div class="quick">
    <button aria-label="撤销"><svg class="ic"><use href="#undo"/></svg><i class="caret"></i></button>
    <button class="off"><svg class="ic"><use href="#redo"/></svg>重做</button>
  </div>
  <div class="quick tight">
    <button><svg class="ic"><use href="#win"/></svg>窗口<i class="caret"></i></button>
    <button><svg class="ic"><use href="#menu"/></svg>菜单<i class="caret"></i></button>
    <button class="overflow" aria-label="更多"><i class="caret"></i></button>
  </div>
  <h1 class="title">NX 12 - 建模</h1>
  <div class="brand">
    <span class="siemens">SIEMENS</span>
    <button class="winbtn" aria-label="最小化"><svg width="12" height="14"><path d="M1 12h9" stroke="#555" stroke-width="2"/></svg></button>
    <button class="winbtn" aria-label="还原"><svg width="14" height="14"><path d="M4.500 5V2.500h8v6H10M1.500 6h8v6h-8z" fill="none" stroke="#444" stroke-width="1.500"/></svg></button>
  </div>
</header>

<nav class="tabs">
  <button class="file">文件(F)</button>
  <button class="tab on">主页</button>
  <button class="tab">曲线</button>
  <button class="tab">曲面</button>
  <button class="tab">分析</button>
  <button class="tab">视图</button>
  <button class="tab">工具</button>
  <button class="tab">装配</button>
  <button class="tab">应用模块</button>
  <div class="finder">
    <div class="search">
      <input type="text" placeholder="查找命令" aria-label="查找命令">
      <svg width="16" height="16" viewBox="0 0 16 16"><circle cx="10" cy="6" r="4.500" fill="none" stroke="#444"/><circle cx="10" cy="6" r="2.500" fill="none" stroke="#444" stroke-width=".7"/><path d="M7 9l-5 5" stroke="#444" stroke-width="2.500"/><path d="M7 9l-5 5" stroke="#fff"/></svg>
    </div>
    <svg width="16" height="16" viewBox="0 0 16 16"><path d="M.5 4V.5H4M12 .5h3.500V4M15.500 12v3.500H12M4 15.500H.5V12" fill="none" stroke="#888"/><path d="M3.500 3.500h9v9h-9z" fill="#fff" stroke="#333"/><path d="M5 6h6v5H5z" fill="#3c8ce4"/></svg>
    <svg class="pen" width="6" height="16" viewBox="0 0 6 16"><path d="M6 5L1 11v2h2l3-4" fill="#fff" stroke="#333"/></svg>
  </div>
</nav>

<section class="ribbon">
  <div class="group first">
    <div class="group-body">
      <button class="big"><svg><use href="#sketch"/></svg>直接草图<i class="caret"></i></button>
    </div>
  </div>

  <div class="group">
    <div class="group-body">
      <button class="big"><svg><use href="#launch"/></svg>启动<i class="caret"></i></button>
      <button class="big"><svg><use href="#sketch"/></svg>任务草图</button>
      <button class="big"><svg><use href="#plane"/></svg>基准平面<i class="caret"></i></button>
      <button class="big"><svg><use href="#expr"/></svg>表达式</button>
    </div>
    <div class="group-foot">常规<i class="caret"></i></div>
  </div>

  <div class="group has-more">
    <div class="group-body">
      <div class="tools">
        <button class="tool"><svg class="ic"><use href="#extrude"/></svg>拉伸</button>
        <button class="tool"><svg class="ic"><use href="#revolve"/></svg>旋转</button>
        <button class="tool"><svg class="ic"><use href="#box"/></svg>长方体</button>
        <button class="tool"><svg class="ic"><use href="#cyl"/></svg>圆柱</button>
        <button class="tool"><svg class="ic"><use href="#cone"/></svg>圆锥</button>
        <button class="tool"><svg class="ic"><use href="#boss"/></svg>凸台</button>
        <button class="tool"><svg class="ic"><use href="#pad"/></svg>垫块</button>
        <button class="tool"><svg class="ic"><use href="#ball"/></svg>球</button>
        <button class="tool"><svg class="ic"><use href="#pocket"/></svg>腔</button>
        <button class="tool"><svg class="ic"><use href="#slot"/></svg>槽</button>
        <button class="tool"><svg class="ic"><use href="#keyslot"/></svg>键槽</button>
        <button class="tool"><svg class="ic"><use href="#rib"/></svg>筋板</button>
        <button class="tool"><svg class="ic"><use href="#shell"/></svg>抽壳</button>
        <button class="tool"><svg class="ic"><use href="#nx5"/></svg>NX5孔</button>
        <button class="tool"><svg class="ic"><use href="#hole"/></svg>孔</button>
        <button class="tool"><svg class="ic"><use href="#thread"/></svg>螺纹刀</button>
        <button class="tool"><svg class="ic"><use href="#draft"/></svg>拔模</button>
        <button class="tool"><svg class="ic"><use href="#thick"/></svg>加厚</button>
        <button class="tool"><svg class="ic"><use href="#bound"/></svg>包容体</button>
        <button class="tool"><svg class="ic"><use href="#extract"/></svg>抽取几何特征</button>
        <button class="tool"><svg class="ic"><use href="#pattern"/></svg>阵列特征</button>
        <button class="tool"><svg class="ic"><use href="#patgeo"/></svg>阵列几何特征</button>
        <button class="tool"><svg class="ic"><use href="#mirfeat"/></svg>镜像特征</button>
        <button class="tool"><svg class="ic"><use href="#mirbody"/></svg>镜像几何体</button>
        <button class="tool"><svg class="ic"><use href="#trim"/></svg>修剪体</button>
        <button class="tool"><svg class="ic"><use href="#split"/></svg>拆分体</button>
        <button class="tool"><svg class="ic"><use href="#delbody"/></svg>删除体</button>
        <button class="tool"><svg class="ic"><use href="#chamfer"/></svg>倒斜角</button>
        <button class="tool"><svg class="ic"><use href="#eblend"/></svg>边倒圆</button>
        <button class="tool"><svg class="ic"><use href="#fblend"/></svg>面倒圆</button>
      </div>
      <button class="big more"><span class="frame"><svg class="ic"><use href="#more"/></svg></span>更多<i class="caret"></i></button>
    </div>
    <div class="group-foot">特征<i class="caret"></i></div>
  </div>

  <div class="group has-more">
    <div class="group-body">
      <button class="big"><svg><use href="#moveface"/></svg>移动面</button>
      <div class="tools">
        <button class="tool"><svg class="ic"><use href="#offreg"/></svg>偏置区域</button>
        <button class="tool"><svg class="ic"><use href="#replface"/></svg>替换面</button>
        <button class="tool"><svg class="ic"><use href="#delface"/></svg>删除面</button>
      </div>
      <button class="big more"><span class="frame"><svg class="ic"><use href="#recycle"/></svg></span>更多<i class="caret"></i></button>
    </div>
    <div class="group-foot">同步建模<i class="caret"></i></div>
  </div>

  <div class="group">
    <div class="group-body">
      <div class="tools">
        <button class="tool"><svg class="ic"><use href="#unite"/></svg>合并</button>
        <button class="tool"><svg class="ic"><use href="#subtract"/></svg>减去</button>
        <button class="tool"><svg class="ic"><use href="#intersect"/></svg>相交</button>
        <button class="tool"><svg class="ic"><use href="#moveobj"/></svg>移动对象</button>
        <button class="tool"><svg class="ic"><use href="#transform"/></svg>变换</button>
        <button class="tool"><svg class="ic"><use href="#rmparm"/></svg>移除参数</button>
      </div>
    </div>
    <div class="group-foot">组合<i class="caret"></i></div>
  </div>

  <div class="group">
    <div class="group-body">
      <div class="tools">
        <button class="tool"><svg class="ic"><use href="#layset"/></svg>图层设置</button>
        <button class="tool"><svg class="ic"><use href="#movelay"/></svg>移动至图层</button>
        <button class="tool"><svg class="ic"><use href="#copylay"/></svg>复制至图层</button>
        <button class="tool"><svg class="ic"><use href="#wcsdyn"/></svg>WCS 动态</button>
        <button class="tool"><svg class="ic"><use href="#wcsorg"/></svg>WCS 原点</button>
        <button class="tool"><svg class="ic"><use href="#wcsori"/></svg>WCS 定向</button>
        <button class="tool"><svg class="ic"><use href="#wcsabs"/></svg>WCS 设为绝对</button>
        <button class="tool on"><svg class="ic"><use href="#wcsshow"/></svg>显示 WCS</button>
      </div>
    </div>
    <div class="group-foot">图层<i class="caret"></i></div>
  </div>
</section>

<section class="selbar">
  <button class="selmenu"><svg class="ic"><use href="#menu"/></svg>菜单(<u>M</u>)<i class="caret"></i></button>
  <div class="pick"><select aria-label="类型过滤器"><option>片体</option></select><i class="caret wide"></i></div>
  <div class="pick"><select aria-label="选择范围"><option>仅在工作部件内</option></select><i class="caret wide"></i></div>
  <div class="snaps">
    <svg class="ic"><use href="#s1"/></svg>
    <svg class="ic"><use href="#s2"/></svg>
    <svg class="ic"><use href="#s3"/></svg>
    <i class="caret"></i>
    <svg class="ic"><use href="#s4"/></svg>
    <svg class="ic"><use href="#s5"/></svg>
    <svg class="ic"><use href="#s6"/></svg>
    <svg class="ic"><use href="#s7"/></svg>
    <i class="caret"></i>
    <svg class="ic"><use href="#s8"/></svg>
    <svg class="ic"><use href="#s9"/></svg>
    <svg class="ic"><use href="#s10"/></svg>
    <svg class="ic"><use href="#s11"/></svg>
    <svg class="ic"><use href="#s12"/></svg>
    <svg class="ic"><use href="#s13"/></svg>
    <svg class="ic"><use href="#s14"/></svg>
    <svg class="ic"><use href="#s15"/></svg>
    <svg class="ic"><use href="#s16"/></svg>
    <svg class="ic"><use href="#s17"/></svg>
    <svg class="ic"><use href="#s18"/></svg>
    <svg class="ic"><use href="#s19"/></svg>
    <svg class="ic"><use href="#s20"/></svg>
    <svg class="ic"><use href="#s21"/></svg>
    <svg class="ic"><use href="#s22"/></svg>
    <svg class="ic"><use href="#s23"/></svg>
  </div>
</section>

<main class="work">
  <aside class="resbar">
    <button class="res gearbtn" aria-label="选项"><svg><use href="#gear"/></svg></button>
    <button class="res" aria-label="装配导航器"><svg><use href="#rAsm"/></svg></button>
    <button class="res" aria-label="约束导航器"><svg><use href="#rCon"/></svg></button>
    <button class="res on" aria-label="部件导航器"><svg><use href="#rNav"/></svg></button>
    <button class="res" aria-label="重用库"><svg><use href="#rLib"/></svg></button>
    <button class="res tall" aria-label="HD3D 工具"><svg><use href="#rInfo"/></svg></button>
    <button class="res tall" aria-label="Web 浏览器"><svg><use href="#rWeb"/></svg></button>
    <button class="res tall" aria-label="历史记录"><svg><use href="#rClock"/></svg></button>
    <button class="res" aria-label="角色"><svg><use href="#rRole"/></svg></button>
    <button class="res" aria-label="系统可视化"><svg><use href="#rWiz"/></svg></button>
    <button class="res" aria-label="工具"><svg><use href="#rTool"/></svg></button>
  </aside>

  <aside class="navigator">
    <div class="nav-title">部件导航器<button aria-label="最大化"><svg width="16" height="15"><path d="M.500.500h15v14H.500zM0 2h16" fill="none" stroke="#111"/></svg></button></div>
    <div class="tree-frame">
      <div class="tree-head"><span>名称</span><i class="sort"></i></div>
      <div class="tree-mid">
        <ul class="tree">
          <li class="dim"><label><input type="checkbox" checked><svg class="ic"><use href="#offface"/></svg>偏置面 (88)</label></li>
          <li class="dim"><label><input type="checkbox" checked><svg class="ic"><use href="#eblend"/></svg>边倒圆 (89)</label></li>
          <li class="dim"><label><input type="checkbox" checked><svg class="ic"><use href="#replface"/></svg>替换面 (90)</label></li>
          <li class="dim"><label><input type="checkbox" checked><svg class="ic"><use href="#trim"/></svg>修剪体 (91)</label></li>
          <li class="dim"><label><input type="checkbox" checked><svg class="ic"><use href="#intc"/></svg>相交曲线 (92)</label></li>
          <li class="dim"><label><input type="checkbox" checked><svg class="ic"><use href="#intc"/></svg>相交曲线 (93)</label></li>
          <li class="dim"><label><input type="checkbox" checked><svg class="ic"><use href="#line"/></svg>直线 (94)</label></li>
          <li class="dim"><label><input type="checkbox" checked><svg class="ic"><use href="#curveon"/></svg>曲面上的...</label></li>
          <li class="dim"><label><input type="checkbox" checked><svg class="ic"><use href="#mirbody"/></svg>Mirror G...</label></li>
          <li class="dim"><label><input type="checkbox" checked><svg class="ic"><use href="#line"/></svg>直线 (97)</label></li>
          <li class="dim"><label><input type="checkbox" checked><svg class="ic"><use href="#curveon"/></svg>曲面上的...</label></li>
          <li class="dim"><label><input type="checkbox" checked><svg class="ic"><use href="#mirfeat"/></svg>镜像特征 ...</label></li>
          <li><label><input type="checkbox" checked><svg class="ic"><use href="#extface"/></svg>抽取面 (105)</label></li>
          <li><label><input type="checkbox" checked><svg class="ic"><use href="#extface"/></svg>抽取面 (106)</label></li>
          <li><label><input type="checkbox" checked><svg class="ic"><use href="#trimsh"/></svg>修剪片体 (107)</label></li>
          <li class="dim"><label><input type="checkbox" checked><svg class="ic"><use href="#bridge"/></svg>桥接曲线 (108)</label></li>
          <li class="dim"><label><input type="checkbox" checked><svg class="ic"><use href="#bridge"/></svg>桥接曲线 (109)</label></li>
          <li class="dim"><label><input type="checkbox" checked><svg class="ic"><use href="#bridge"/></svg>桥接曲线 (110)</label></li>
          <li class="dim"><label><input type="checkbox" checked><svg class="ic"><use href="#intc"/></svg>相交曲线 (111)</label></li>
          <li class="dim"><label><input type="checkbox" checked><svg class="ic"><use href="#bridge"/></svg>桥接曲线 (112)</label></li>
          <li class="dim"><label><input type="checkbox" checked><svg class="ic"><use href="#bridge"/></svg>桥接曲线 (113)</label></li>
          <li><label><input type="checkbox" checked><svg class="ic"><use href="#mesh"/></svg>通过曲线网格...</label></li>
          <li><label><input type="checkbox" checked><svg class="ic"><use href="#trimsh"/></svg>修剪片体 (115)</label></li>
          <li><label><input type="checkbox" checked><svg class="ic"><use href="#sew"/></svg>缝合 (116)</label></li>
          <li><label><input type="checkbox" checked><svg class="ic"><use href="#sew"/></svg>缝合 (117)</label></li>
          <li><label><input type="checkbox" checked><svg class="ic"><use href="#nside"/></svg>N 边曲面 (11...</label></li>
          <li><label><input type="checkbox" checked><svg class="ic"><use href="#sew"/></svg>缝合 (119)</label></li>
          <li><label><input type="checkbox" checked><svg class="ic"><use href="#nside"/></svg>N 边曲面 (12...</label></li>
          <li class="current"><label><input type="checkbox" checked><svg class="ic"><use href="#sew"/></svg>缝合 (121)</label></li>
        </ul>
        <div class="vscroll"><i></i></div>
      </div>
      <div class="hscroll"><i></i></div>
    </div>
    <div class="splitter"></div>
    <button class="fold">相关性</button>
    <button class="fold">细节</button>
    <button class="fold open">预览</button>
    <div class="preview"><div></div></div>
  </aside>

  <section class="stage">
    <nav class="docs">
      <button class="doc on"><svg class="ic"><use href="#part"/></svg>2.prt<svg class="sm"><use href="#mod"/></svg><svg class="x" viewBox="0 0 10 10"><path d="M1 1l8 8M9 1L1 9" stroke="#b9c3c8" stroke-width="2.500"/></svg></button>
      <button class="doc"><svg class="ic"><use href="#part"/></svg>1.prt<svg class="sm"><use href="#mod"/></svg></button>
    </nav>
    <div class="canvas">
      <svg class="model" viewBox="276 256 2241 1060" preserveAspectRatio="xMinYMin slice">
        <defs>
          <linearGradient id="mOr" gradientUnits="userSpaceOnUse" x1="1979" y1="616" x2="2500" y2="513">
            <stop offset="0" stop-color="#ffe822"/><stop offset=".015" stop-color="#ffdf1c"/><stop offset=".036" stop-color="#ffcb0c"/><stop offset=".07" stop-color="#ffd820"/><stop offset=".11" stop-color="#ffd423"/><stop offset=".155" stop-color="#ffb416"/><stop offset=".19" stop-color="#ff9d09"/><stop offset=".24" stop-color="#ff9a06"/><stop offset=".32" stop-color="#f39300"/><stop offset=".42" stop-color="#f29000"/><stop offset=".49" stop-color="#d98200"/><stop offset=".53" stop-color="#cd7a00"/><stop offset=".74" stop-color="#c27300"/><stop offset=".92" stop-color="#a66400"/><stop offset="1" stop-color="#855000"/>
          </linearGradient>
          <clipPath id="mClip"><path d="M928 748Q1000 755 1051 762 1280 795 1509 747 1700 714 1860 661L1979 616 2015 800 1913 840Q1740 898 1570 928 1400 957 1245 956 1170 956 1102 949L964 932z"/></clipPath>
          <filter id="mSoft" filterUnits="userSpaceOnUse" x="900" y="500" width="1300" height="600"><feGaussianBlur stdDeviation="16"/></filter>
          <linearGradient id="mUp" gradientUnits="userSpaceOnUse" x1="1070" y1="832" x2="1063" y2="884"><stop offset="0" stop-color="#ff0"/><stop offset=".5" stop-color="#d8d800"/><stop offset="1" stop-color="#9c9c00"/></linearGradient>
          <linearGradient id="mLow" gradientUnits="userSpaceOnUse" x1="1063" y1="884" x2="1057" y2="930"><stop offset="0" stop-color="#9a9a00"/><stop offset=".5" stop-color="#cccc00"/><stop offset="1" stop-color="#ff0"/></linearGradient>
          <radialGradient id="mCorner" gradientUnits="userSpaceOnUse" cx="1147" cy="892" r="46"><stop offset="0" stop-color="#9a9a00"/><stop offset=".5" stop-color="#cccc00"/><stop offset="1" stop-color="#ff0"/></radialGradient>
          <linearGradient id="mLip" x2="1"><stop offset="0" stop-color="#ff0"/><stop offset="1" stop-color="#d8d800"/></linearGradient>
        </defs>

        <!-- outer wall -->
        <path d="M927 966Q1000 976 1062 984 1130 991 1209 991 1400 992 1570 962 1800 920 2015 839 2120 798 2222 740 2300 694 2357 645 2417 590 2460 527 2503 455 2503 380 2503 362 2498 347L2454 355 2400 500 2015 790 1245 945 964 932z" fill="#663b00" class="edge"/>
        <!-- orange band -->
        <path d="M1979 617Q2010 614 2047 601 2075 590 2105 572 2155 544 2200 517 2270 475 2327 410 2402 330 2417 256H2435L2454 355Q2462 395 2455 430 2443 485 2413 533 2380 582 2333 622 2270 685 2200 723 2150 753 2100 778 2055 798 2015 800z" fill="url(#mOr)" class="edge"/>
        <path d="M2435 256H2482L2498 347 2454 355z" fill="#ffce0c" class="edge"/>
        <!-- yellow body -->
        <g clip-path="url(#mClip)">
          <path d="M900 600h1200v400H900z" fill="#ff0"/>
          <path d="M1280 866Q1620 845 2020 690" fill="none" stroke="#ffff50" stroke-width="34" opacity=".7" filter="url(#mSoft)"/>
          <path d="M1820 895Q1940 860 2040 810" fill="none" stroke="#c4c400" stroke-width="50" filter="url(#mSoft)"/>
        </g>
        <path d="M928 748Q1000 755 1051 762 1280 795 1509 747 1700 714 1860 661L1979 616 2015 800 1913 840Q1740 898 1570 928 1400 957 1245 956 1170 956 1102 949L964 932z" fill="none" class="edge"/>
        <!-- pocket -->
        <path d="M1147 850h50v95h-50z" fill="url(#mCorner)"/>
        <path d="M988 815L1156 838 1147 895 979 872z" fill="url(#mUp)"/>
        <path d="M979 872L1148 895V942L967 917z" fill="url(#mLow)"/>
        <path d="M1156 843L1147 895Q1174 886 1179 843z" fill="url(#mLip)"/>
        <path d="M928 748Q944 770 963 766 988 782 990 817 990 845 979 872 967 900 964 932z" fill="#c8c800" class="edge"/>
        <g class="edge" fill="none">
          <path d="M936 754L1051 769"/>
          <path d="M963 767L1051 778" stroke-dasharray="5 4"/>
          <path d="M979 872L1147 895M1156 843Q1155 872 1147 895 1176 888 1179 843"/>
          <path d="M1233 843Q1242 885 1230 903 1205 942 1150 938 1060 930 967 917"/>
        </g>
        <path d="M928 748L890 782 927 966 964 932z" fill="#c87600" class="edge"/>
        <path d="M1979 616Q1960 700 2015 800" fill="#ff0" class="edge"/>
        <path d="M1979 616L2015 800" class="edge"/>
        <!-- direction handles -->
        <path d="M1964 622L2047 590" stroke="#b09c50" fill="none"/>
        <path d="M1988 703L1927 727" stroke="#8a7a38" stroke-width="3"/>
        <path d="M1914 732l14-10 3 8z" fill="#8a7a38" stroke="#5c5020" stroke-width=".6"/>
        <circle cx="1963.500" cy="622" r="4.500" fill="#a8954a" stroke="#6c5c24" stroke-width=".6"/>
        <circle cx="1988.500" cy="703" r="4.500" fill="#a8954a" stroke="#6c5c24" stroke-width=".6"/>
      </svg>
      <div class="tag"><i class="grip"></i>目标</div>
      <div class="watermark">UG爱好者论坛 WWW.UGSNX.COM</div>
    </div>
  </section>
</main>

<form class="patch" onsubmit="return false">
  <div class="patch-title"><svg class="ic"><use href="#gear"/></svg><h2>补片</h2>
    <button type="button" aria-label="重置"><svg class="ic" viewBox="0 0 16 16"><path d="M9 2.500a5.500 5.500 0 1 1-6 3M5 2v5H1" fill="none" stroke="#fff" stroke-width="2"/></svg></button>
    <button type="button" aria-label="关闭"><svg class="ic" viewBox="0 0 16 16"><path d="M3 3l10 10M13 3L3 13" stroke="#fff" stroke-width="2.200"/></svg></button>
  </div>
  <section class="sec">
    <button type="button" class="sec-head">目标<svg><use href="#chev"/></svg></button>
    <div class="sec-row"><span class="picked"><svg class="tick"><use href="#tick"/></svg>选择体 (1)</span>
      <button type="button" class="pickbtn" aria-label="选择体"><svg viewBox="0 0 24 24"><path d="M2 6l10-5 10 5v11l-10 6-10-6z" fill="url(#gHot)" stroke="#f03800"/><path d="M2 6l10 5 10-5M12 11v12" fill="none" stroke="#f03800"/></svg></button></div>
  </section>
  <section class="sec">
    <button type="button" class="sec-head">工具<svg><use href="#chev"/></svg></button>
    <div class="sec-row"><span class="picked hot"><svg class="tick"><use href="#tick"/></svg>选择片体 (1)</span>
      <button type="button" class="pickbtn" aria-label="选择片体"><svg viewBox="0 0 24 24"><path d="M8 20l14-9 1 3-10 6z" fill="#aaa"/><path d="M1 13C4 7 9 3 14 3l9 6c-6 1-11 5-14 11z" fill="url(#gHot)" stroke="#f03000" stroke-width="1.200"/></svg></button></div>
  </section>
  <section class="sec">
    <button type="button" class="sec-head">要移除的目标区域<svg><use href="#chev"/></svg></button>
    <div class="sec-row short"><span class="picked">反向</span>
      <button type="button" class="pickbtn small" aria-label="反向"><svg class="ic" viewBox="0 0 16 16"><path d="M2 3l12 10" stroke="#222"/><path d="M2 15l1-5 4 3zM14 1l-1 5-4-3z" fill="#1010b0"/><path d="M4 12l2-2M12 4l-2 2" stroke="#1010b0" stroke-width="2"/></svg></button></div>
  </section>
  <section class="sec"><button type="button" class="sec-head closed">工具方向面<svg><use href="#chev"/></svg></button></section>
  <section class="sec"><button type="button" class="sec-head closed">设置<svg><use href="#chev"/></svg></button></section>
  <section class="sec"><button type="button" class="sec-head closed">预览<svg><use href="#chev"/></svg></button></section>
  <div class="patch-foot">
    <button class="btn primary">确定</button>
    <button type="button" class="btn">应用</button>
    <button type="button" class="btn">取消</button>
  </div>
</form>

<div class="alert" role="alertdialog">
  <h2>补片</h2>
  <div class="alert-body">
    <svg width="46" height="46" viewBox="0 0 46 46"><circle cx="23" cy="24" r="21.500" fill="#999" opacity=".5"/><circle cx="22.500" cy="22.500" r="21" fill="#f4f4f4" stroke="#888"/><circle cx="22.500" cy="22.500" r="19" fill="url(#gErr)"/><path d="M14 14l17 17M31 14L14 31" stroke="#eee" stroke-width="6.500"/></svg>
    <p>工具片体边未与目标体封闭或未形成闭环。</p>
  </div>
  <button class="ok"><span>确定(<u>O</u>)</span></button>
</div>

</body>
</html>
```

FILE: styles.css
```css
* {
  box-sizing: border-box;
}

html, body {
  height: 100%;
}

body {
  margin: 0;
  display: flex;
  flex-direction: column;
  position: relative;
  overflow: hidden;
  background: #fff;
  color: #000;
  font-family: "Open Sans", "Noto Sans CJK SC", sans-serif;
  font-size: 17px;
  font-weight: 300;
  line-height: 20px;
}

button, input, select {
  font: inherit;
  color: inherit;
}

button {
  padding: 0;
  border: 0;
  background: none;
  white-space: nowrap;
  cursor: pointer;
}

h1, h2, p, ul {
  margin: 0;
  padding: 0;
  font-weight: inherit;
}

svg {
  display: block;
  flex: none;
}

.sprite {
  position: absolute;
  width: 0;
  height: 0;
}

.ic {
  width: 16px;
  height: 16px;
}

.caret {
  flex: none;
  width: 0;
  height: 0;
  border: 4px solid transparent;
  border-top-color: #111;
  border-bottom: 0;
}

.caret.wide {
  border-width: 6px 6px 0;
}

/* title bar */
.titlebar {
  display: flex;
  align-items: center;
  height: 34px;
  flex: none;
}

.logo {
  width: 50px;
  padding-left: 3px;
  border-right: 1px solid #d6d6d6;
  color: #8c9fae;
  font-family: "Liberation Sans", sans-serif;
  font-size: 27px;
  font-weight: bold;
  line-height: 26px;
}

.quick {
  display: flex;
  gap: 6px;
  padding: 3px 7px 3px 8px;
  border-right: 1px solid #d6d6d6;
}

.quick.tight {
  padding-left: 5px;
  gap: 4px;
  border: 0;
}

.quick button {
  display: flex;
  align-items: center;
  gap: 4px;
}

.quick .off {
  color: #b0b0b0;
}

.quick .overflow {
  flex-direction: column;
  justify-content: center;
  gap: 2px;
  padding-left: 8px;
}

.overflow::before {
  content: "";
  width: 9px;
  border-top: 1px solid #111;
}

.title {
  flex: 1;
  padding-left: 820px;
  font-size: 17px;
}

.brand {
  display: flex;
  align-items: center;
  padding-right: 4px;
}

.siemens {
  margin-right: 32px;
  color: #099;
  font-weight: bold;
  font-size: 18px;
}

.winbtn + .winbtn {
  margin-left: 20px;
}

/* ribbon tabs */
.tabs {
  display: flex;
  height: 36px;
  flex: none;
  background: #dcdcdc;
  font-size: 21px;
}

.file {
  width: 107px;
  margin-right: 2px;
  background: #539fb8;
  color: #fff;
}

.tab {
  padding: 0 13px;
}

.tab.on {
  margin-top: 1px;
  border-top: 1px solid #aaa;
  background: #fff;
  color: #006487;
}

.finder {
  display: flex;
  align-items: center;
  gap: 11px;
  margin-left: auto;
}

.search {
  display: flex;
  align-items: center;
  width: 188px;
  height: 27px;
  padding-right: 5px;
  border: 1px solid #a9a9a9;
  background: #fff;
}

.search input {
  flex: 1;
  min-width: 0;
  border: 0;
  padding: 0 2px;
  font-size: 17px;
  outline: 0;
}

.search input::placeholder {
  color: #999;
}

/* ribbon */
.ribbon {
  display: flex;
  height: 117px;
  flex: none;
  padding: 5px 0 4px;
  border-bottom: 1px solid #d9d9d9;
}

.group {
  position: relative;
  display: flex;
  flex-direction: column;
  padding: 0 13px;
  border-right: 1px solid #d9d9d9;
}

.group.first {
  padding: 0 5px 0 6px;
}

.group.has-more {
  padding-right: 5px;
}

.group-body {
  display: flex;
  gap: 8px;
  height: 87px;
  margin-top: -3px;
}

.tools {
  display: grid;
  grid-auto-flow: column;
  grid-template-rows: repeat(3, 29px);
  column-gap: 10px;
  justify-items: start;
}

.tool {
  display: flex;
  align-items: center;
  gap: 3px;
}

.tool.on {
  margin: 0 -3px;
  padding: 0 6px 0 2px;
  border: 1px solid #a8d2df;
  background: #cde6ec;
}

.big {
  display: flex;
  flex-direction: column;
  align-items: center;
  padding-top: 3px;
}

.big svg {
  width: 32px;
  height: 32px;
  margin-bottom: 6px;
}

.big .caret {
  margin-top: 8px;
}

.big.more {
  padding-top: 2px;
  margin-left: 5px;
}

.frame {
  display: grid;
  place-items: center;
  width: 38px;
  height: 35px;
  margin-bottom: 4px;
  border: 1px solid #d4d4d4;
  border-radius: 4px;
}

.frame svg {
  width: 16px;
  height: 16px;
  margin: 0;
}

.group-foot {
  display: flex;
  align-items: center;
  justify-content: center;
  flex: 1;
  padding: 6px 24px 0 0;
  color: #006487;
}

.group-foot .caret {
  position: absolute;
  right: 10px;
}

/* selection bar */
.selbar {
  display: flex;
  align-items: center;
  height: 39px;
  flex: none;
  padding-left: 10px;
  border-bottom: 1px solid #888;
}

.selmenu {
  display: flex;
  align-items: center;
  height: 31px;
  padding-right: 8px;
  border-right: 1px solid #d9d9d9;
}

.selmenu svg {
  margin-right: 4px;
}

.selmenu .caret {
  margin-left: 5px;
}

.pick {
  position: relative;
  width: 202px;
  margin-left: 13px;
}

.pick + .pick {
  width: 213px;
  margin-left: 9px;
}

.pick select {
  appearance: none;
  width: 100%;
  height: 27px;
  padding: 0 2px;
  border: 1px solid #a9a9a9;
  border-radius: 0;
  background: #fff;
}

.pick .caret {
  position: absolute;
  right: 7px;
  top: 11px;
}

.snaps {
  display: flex;
  align-items: center;
  gap: 9px;
  height: 31px;
  padding: 0 12px 0 8px;
  border-right: 1px solid #d9d9d9;
}

.snaps .caret {
  margin: 0 -2px;
}

/* work area */
.work {
  display: grid;
  grid-template-columns: 32px 244px 1fr;
  flex: 1;
  min-height: 0;
}

.resbar {
  background: #dcdcdc;
  border-right: 1px solid #999;
}

.res {
  display: grid;
  place-items: center;
  width: 100%;
  height: 42px;
  padding-left: 4px;
}

.res svg {
  width: 24px;
  height: 24px;
}

.res.on {
  width: 30px;
  height: 44px;
  margin: -1px 0 0 2px;
  padding-left: 2px;
  border: 1px solid #999;
  border-right: 0;
  background: #fff;
}

.res.tall {
  margin-top: 12px;
}

.res.gearbtn {
  height: 28px;
  margin-bottom: 14px;
  padding: 0;
}

.gearbtn svg {
  width: 13px;
  height: 13px;
}

.navigator {
  display: flex;
  flex-direction: column;
  min-height: 0;
  padding: 0 9px 0 6px;
  border-right: 1px solid #888;
  font-size: 18px;
}

.nav-title {
  display: flex;
  justify-content: space-between;
  align-items: center;
  height: 35px;
  padding: 3px 7px 0 5px;
  flex: none;
}

.tree-frame {
  border: 1px solid #d9d9d9;
  padding: 1px;
  background: #efefef;
}

.tree-head {
  display: flex;
  align-items: center;
  gap: 20px;
  height: 27px;
  padding-left: 5px;
  border-right: 26px solid #c0c0c0;
  border-bottom: 1px solid #ccc;
}

.sort {
  border: 6px solid transparent;
  border-bottom-color: #111;
  border-top: 0;
}

.tree-mid {
  display: flex;
}

.tree {
  flex: 1;
  min-width: 0;
  padding-bottom: 20px;
  list-style: none;
  background: #fafafa;
}

.tree li {
  display: flex;
  height: 28px;
  overflow: hidden;
  border-bottom: 1px solid #ececec;
  background: #fff;
}

.tree li:nth-child(even) {
  background: #fafafa;
}

.tree li::before {
  content: "";
  flex: none;
  width: 10px;
  height: 14px;
  margin-left: 28px;
  border-bottom: 1px dotted #999;
}

.tree li::before,
.tree li:not(:last-child) label {
  background: linear-gradient(#aaa 50%, transparent 50%) 0 0 / 1px 4px repeat-y;
}

.tree label {
  display: flex;
  align-items: center;
  gap: 3px;
  margin-left: -10px;
  padding-left: 11px;
  white-space: nowrap;
}

.tree input {
  appearance: none;
  flex: none;
  width: 12px;
  height: 12px;
  margin: 0;
  border: 1px solid #000;
  background: #fff;
}

.tree input:checked::after {
  content: "";
  display: block;
  width: 10px;
  height: 10px;
  background: #10b428;
  clip-path: polygon(0 45%, 22% 38%, 42% 60%, 85% 5%, 100% 12%, 45% 100%, 35% 100%);
}

.tree .dim {
  color: #909090;
}

.tree .current {
  font-weight: bold;
}

.vscroll {
  width: 26px;
  padding-left: 8px;
  display: flex;
  flex-direction: column;
  justify-content: flex-end;
}

.vscroll i {
  width: 11px;
  height: 187px;
  margin-bottom: 26px;
  background: #868686;
}

.hscroll {
  height: 26px;
  padding: 8px 0 0 26px;
}

.hscroll i {
  display: block;
  width: 72px;
  height: 11px;
  background: #868686;
}

.splitter {
  flex: none;
  height: 5px;
  border: 1px solid #aaa;
  background: #dcdcdc;
}

.fold {
  flex: none;
  height: 32px;
  padding-left: 7px;
  border-bottom: 2px solid #d0d0d0;
  color: #006487;
  font-size: 22px;
  font-weight: 400;
  line-height: 30px;
  text-align: left;
}

.fold.open {
  height: 36px;
  padding: 0 0 2px 6px;
  border-bottom: 0;
  border-left: 1px solid #d9d9d9;
}

.preview {
  flex: 1;
  padding-left: 14px;
  border-left: 1px solid #d9d9d9;
}

.preview div {
  height: 100%;
  border: 1px solid #d0d0d0;
  border-width: 1px 0 0 1px;
}

/* graphics window */
.stage {
  display: flex;
  flex-direction: column;
  min-width: 0;
  min-height: 0;
}

.docs {
  display: flex;
  height: 30px;
  flex: none;
  border-bottom: 2px solid #539fb8;
}

.doc {
  display: flex;
  align-items: center;
  gap: 5px;
  padding: 0 6px;
  font-size: 19px;
}

.doc.on {
  background: #539fb8;
  color: #fff;
}

.doc .sm {
  width: 11px;
  height: 11px;
  margin-left: 2px;
}

.doc .x {
  width: 9px;
  height: 9px;
}

.canvas {
  position: relative;
  flex: 1;
  min-height: 0;
  background: linear-gradient(#b3b4b6, #e8e9ea);
}

.model {
  width: 100%;
  height: 100%;
}

.edge {
  stroke: #333;
  stroke-width: 1px;
}

.tag {
  position: absolute;
  left: 1771px;
  top: 315px;
  display: flex;
  align-items: center;
  gap: 10px;
  height: 36px;
  padding: 0 2px 0 3px;
  border: 1px solid #a9a9a9;
  background: #f0f0f0;
  font-size: 18px;
}

.grip {
  width: 6px;
  height: 32px;
  background: radial-gradient(#aaa 1px, transparent 2px) 0 0 / 4px 4px;
}

.watermark {
  position: absolute;
  right: 4px;
  bottom: 1px;
  color: #555;
  font-family: "Liberation Mono", "Noto Sans CJK SC", monospace;
  font-size: 14px;
}

/* patch dialog */
.patch {
  position: absolute;
  left: 186px;
  top: 321px;
  width: 429px;
  border: 1px solid #d4d4d4;
  border-top: 0;
  background: #efefef;
  font-size: 18px;
}

.patch-title {
  display: flex;
  align-items: center;
  height: 32px;
  margin: 0 -1px 4px;
  padding: 0 11px;
  background: #539fb8;
  color: #fff;
}

.patch-title h2 {
  flex: 1;
  padding-left: 10px;
  font-size: 22px;
}

.patch-title button + button {
  margin-left: 12px;
}

.sec {
  margin: 0 5px 4px;
  border-bottom: 1px solid #c4c4c4;
  background: #fff;
}

.sec-head {
  display: flex;
  align-items: center;
  justify-content: space-between;
  width: 100%;
  height: 30px;
  padding: 2px 5px 0 7px;
  color: #006487;
  font-size: 22px;
  font-weight: 400;
}

.sec-head svg {
  width: 20px;
  height: 14px;
}

.sec-head.closed svg {
  transform: rotate(180deg);
}

.sec-row {
  display: flex;
  gap: 2px;
  height: 47px;
  padding: 8px 9px 7px;
}

.sec-row.short {
  height: 43px;
}

.picked {
  display: flex;
  flex: 1;
  align-items: center;
  gap: 6px;
  padding-left: 1px;
}

.picked.hot {
  background: #ffe077;
}

.tick {
  width: 12px;
  height: 12px;
}

.pickbtn {
  display: grid;
  place-items: center;
  width: 32px;
  border: 1px solid #a9a9a9;
}

.pickbtn svg {
  width: 24px;
  height: 24px;
}

.pickbtn.small {
  width: 24px;
}

.pickbtn.small svg {
  width: 16px;
  height: 16px;
}

.patch-foot {
  display: flex;
  justify-content: flex-end;
  gap: 5px;
  padding: 8px 15px 9px;
}

.btn {
  width: 66px;
  height: 32px;
  border: 1px solid #a9a9a9;
  background: #dcdcdc;
}

.btn.primary {
  border-color: #74b4c9;
  background: #74b4c9;
  color: #fff;
}

/* error box */
.alert {
  position: absolute;
  left: 1051px;
  top: 686px;
  width: 458px;
  height: 157px;
  border: 1px solid #a9a9a9;
  border-top: 0;
  background: #f0f0f0;
  font-size: 18px;
}

.alert h2 {
  height: 38px;
  margin: 0 -1px;
  padding: 4px 9px 0;
  background: #539fb8;
  color: #fff;
  font-size: 18px;
  line-height: 34px;
}

.alert-body {
  display: flex;
  align-items: center;
  gap: 22px;
  padding: 14px 20px 15px;
}

.ok {
  display: block;
  width: 95px;
  height: 32px;
  margin: 0 auto;
  padding: 3px;
  background: #74b4c9;
  color: #fff;
}

.ok span {
  display: block;
  height: 26px;
  border: 1px dotted #111;
  line-height: 24px;
}
```
